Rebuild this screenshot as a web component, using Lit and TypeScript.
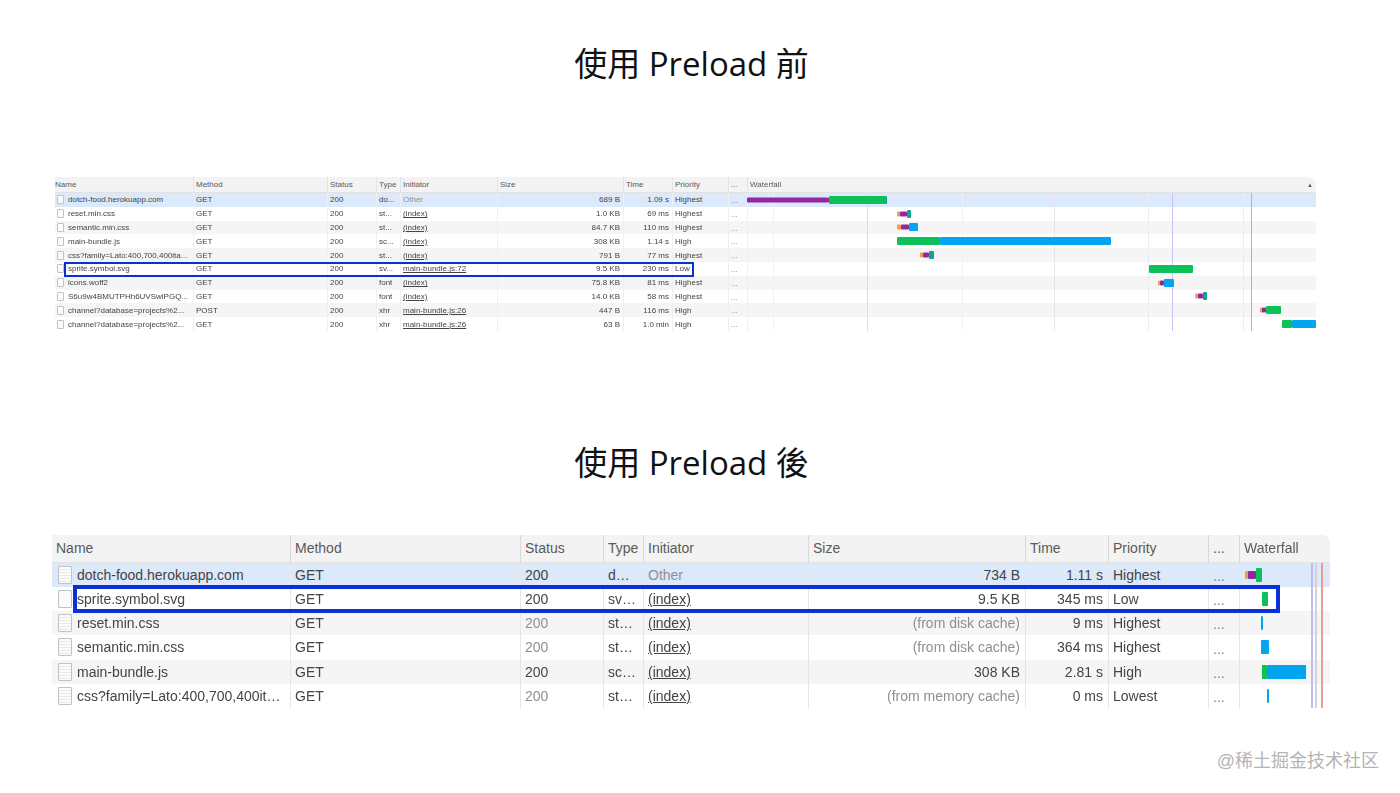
import { LitElement, html, css } from 'lit';
import { customElement, property } from 'lit/decorators.js';

type Seg = [number, number, string, boolean?]; // page x start, page x end, colour, thin
interface Row {
  name: string;
  method: string;
  status: string;
  type: string;
  init: string;
  size: string;
  time: string;
  prio: string;
  dim?: boolean;
  bars: Seg[];
}
interface Marker {
  x: number;
  color: string;
}

const PURPLE = '#93279f';
const GREEN = '#0cc158';
const BLUE = '#03a5ef';
const TEAL = '#12a488';
const ORANGE = '#f0a040';

@customElement('net-table')
export class NetTable extends LitElement {
  static styles = css`
    :host {
      display: block;
      position: relative;
      font-family: 'Liberation Sans', Arial, sans-serif;
      color: #444;
    }

    :host([size='small']) {
      width: 1261px;
      margin-left: 55px;
      font-size: 8px;
      --head: 16px;
      --row: 13.8px;
      --pad: 3px;
      --head-lift: 1px;
      --first-head: 0px;
      --first-row: 2px;
      --icon-w: 7px;
      --icon-h: 9px;
      --icon-gap: 4px;
      --tall: 8px;
      --thin: 5px;
      --rule: #f0f0f0;
      --head-rule: #e4e4e4;
      --marker: 1px;
      filter: blur(0.45px);
    }

    :host([size='large']) {
      width: 1278px;
      margin-left: 52px;
      font-size: 14px;
      --head: 28px;
      --row: 24.15px;
      --pad: 5px;
      --head-lift: 3px;
      --first-head: 4px;
      --first-row: 6px;
      --icon-w: 14px;
      --icon-h: 18px;
      --icon-gap: 5px;
      --tall: 14px;
      --thin: 8px;
      --rule: #e6e6e6;
      --head-rule: #d8d8d8;
      --marker: 1.5px;
      filter: blur(0.4px);
    }

    .row {
      display: grid;
      height: var(--row);
      align-items: stretch;
    }

    .row.head {
      height: var(--head);
      background: #f3f3f3;
      border-radius: 0 8px 0 0;
      color: #5a5a5a;
      box-shadow: inset 0 -1px 0 #e2e2e2;
    }

    .row.selected {
      background: #dce9fb;
    }

    .row.alt {
      background: #f5f5f5;
    }

    .cell {
      display: flex;
      align-items: center;
      gap: var(--icon-gap);
      padding: 0 var(--pad);
      min-width: 0;
      white-space: nowrap;
      overflow: hidden;
      box-shadow: inset 1px 0 0 var(--rule);
    }

    .cell:first-child {
      box-shadow: none;
    }

    .cell.first {
      padding-left: var(--first-row);
    }

    .head .cell {
      padding-bottom: var(--head-lift);
      box-shadow: inset 1px 0 0 var(--head-rule);
    }

    .head .cell:first-child {
      padding-left: var(--first-head);
      box-shadow: none;
    }

    .cell.right {
      justify-content: flex-end;
    }

    .cell.muted {
      color: #8f8f8f;
    }

    .cell.link span {
      text-decoration: underline;
      text-underline-offset: 1px;
    }

    .cell.more {
      color: #808080;
      padding-top: 0.15em;
    }

    .cell.falls {
      position: relative;
      overflow: visible;
      justify-content: space-between;
    }

    .file {
      flex: none;
      width: var(--icon-w);
      height: var(--icon-h);
      box-sizing: border-box;
      background: #fbfbfb;
      border: 1px solid #c2c2c2;
      border-radius: 1px;
    }

    :host([size='large']) .file.lined {
      background: repeating-linear-gradient(#fbfbfb 0 2px, #e9e9e9 2px 3px);
    }

    .sort {
      font-size: 6px;
      color: #555;
    }

    .bar {
      position: absolute;
      top: 50%;
      height: var(--tall);
      transform: translateY(-50%);
      border-radius: 1px;
      z-index: 2;
    }

    .bar.thin {
      height: var(--thin);
    }

    .marker {
      position: absolute;
      top: var(--head);
      bottom: 0;
      width: var(--marker);
    }

    .outline {
      position: absolute;
      box-sizing: border-box;
      border: solid #0b30d6;
      z-index: 3;
    }
  `;

  @property({ reflect: true }) size = 'small';
  @property({ type: Array }) widths: number[] = [];
  @property({ type: Array }) rows: Row[] = [];
  @property({ type: Array }) markers: Marker[] = [];
  @property({ type: Array }) box: number[] = [];
  @property({ type: Number }) originX = 0;
  @property({ type: Number }) originY = 0;
  @property({ type: Boolean }) sortArrow = false;

  private get falls() {
    return this.originX + this.widths.slice(0, -1).reduce((a, b) => a + b, 0);
  }

  private rowClass(i: number) {
    if (i === 0) return 'row selected';
    return i % 2 === 0 ? 'row alt' : 'row';
  }

  private renderBars(bars: Seg[]) {
    return bars.map(
      ([from, to, color, thin]) => html`<div
        class="bar ${thin ? 'thin' : ''}"
        style="left:${from - this.falls}px;width:${to - from}px;background:${color}"
      ></div>`,
    );
  }

  render() {
    const cols = `grid-template-columns:${this.widths.map((w) => `${w}px`).join(' ')}`;
    const [bx, by, bw, bh, bb] = this.box;
    return html`
      <div class="row head" style=${cols}>
        ${['Name', 'Method', 'Status', 'Type', 'Initiator', 'Size', 'Time', 'Priority', '...'].map(
          (t) => html`<div class="cell">${t}</div>`,
        )}
        <div class="cell falls">
          Waterfall${this.sortArrow ? html`<span class="sort">▲</span>` : ''}
        </div>
      </div>
      ${this.rows.map(
        (r, i) => html`
          <div class=${this.rowClass(i)} style=${cols}>
            <div class="cell first">
              <div class="file ${r.name.endsWith('.svg') ? '' : 'lined'}"></div>
              ${r.name}
            </div>
            <div class="cell">${r.method}</div>
            <div class="cell ${r.dim ? 'muted' : ''}">${r.status}</div>
            <div class="cell">${r.type}</div>
            <div class="cell link ${r.init === 'Other' ? 'muted' : ''}">
              ${r.init === 'Other' ? r.init : html`<span>${r.init}</span>`}
            </div>
            <div class="cell right ${r.size.startsWith('(') ? 'muted' : ''}">${r.size}</div>
            <div class="cell right">${r.time}</div>
            <div class="cell">${r.prio}</div>
            <div class="cell more">...</div>
            <div class="cell falls">${this.renderBars(r.bars)}</div>
          </div>
        `,
      )}
      ${this.markers.map(
        (m) => html`<div
          class="marker"
          style="left:${m.x - this.originX}px;background:${m.color}"
        ></div>`,
      )}
      <div
        class="outline"
        style="left:${bx - this.originX}px;top:${by - this.originY}px;width:${bw}px;height:${bh}px;border-width:${bb}px"
      ></div>
    `;
  }
}

const BEFORE: Row[] = [
  { name: 'dotch-food.herokuapp.com', method: 'GET', status: '200', type: 'do...', init: 'Other', size: '689 B', time: '1.09 s', prio: 'Highest', bars: [[747, 829, PURPLE, true], [829, 886, GREEN], [886, 887, TEAL]] },
  { name: 'reset.min.css', method: 'GET', status: '200', type: 'st...', init: '(index)', size: '1.0 KB', time: '69 ms', prio: 'Highest', bars: [[897, 900, ORANGE, true], [900, 907, PURPLE, true], [907, 911, TEAL]] },
  { name: 'semantic.min.css', method: 'GET', status: '200', type: 'st...', init: '(index)', size: '84.7 KB', time: '110 ms', prio: 'Highest', bars: [[897, 901, ORANGE, true], [901, 909, PURPLE, true], [909, 918, BLUE]] },
  { name: 'main-bundle.js', method: 'GET', status: '200', type: 'sc...', init: '(index)', size: '308 KB', time: '1.14 s', prio: 'High', bars: [[897, 940, GREEN], [940, 1111, BLUE]] },
  { name: 'css?family=Lato:400,700,400ita...', method: 'GET', status: '200', type: 'st...', init: '(index)', size: '791 B', time: '77 ms', prio: 'Highest', bars: [[920, 923, ORANGE, true], [923, 929, PURPLE, true], [929, 934, TEAL]] },
  { name: 'sprite.symbol.svg', method: 'GET', status: '200', type: 'sv...', init: 'main-bundle.js:72', size: '9.5 KB', time: '230 ms', prio: 'Low', bars: [[1149, 1193, GREEN]] },
  { name: 'icons.woff2', method: 'GET', status: '200', type: 'font', init: '(index)', size: '75.8 KB', time: '81 ms', prio: 'Highest', bars: [[1158, 1160, ORANGE, true], [1160, 1164, PURPLE, true], [1164, 1174, BLUE]] },
  { name: 'S6u9w4BMUTPHh6UVSwiPGQ...', method: 'GET', status: '200', type: 'font', init: '(index)', size: '14.0 KB', time: '58 ms', prio: 'Highest', bars: [[1195, 1198, ORANGE, true], [1198, 1203, PURPLE, true], [1203, 1207, TEAL]] },
  { name: 'channel?database=projects%2...', method: 'POST', status: '200', type: 'xhr', init: 'main-bundle.js:26', size: '447 B', time: '116 ms', prio: 'High', bars: [[1260, 1262, ORANGE, true], [1262, 1266, PURPLE, true], [1266, 1281, GREEN]] },
  { name: 'channel?database=projects%2...', method: 'GET', status: '200', type: 'xhr', init: 'main-bundle.js:26', size: '63 B', time: '1.0 min', prio: 'High', bars: [[1282, 1292, GREEN], [1292, 1316, BLUE]] },
];

const AFTER: Row[] = [
  { name: 'dotch-food.herokuapp.com', method: 'GET', status: '200', type: 'd…', init: 'Other', size: '734 B', time: '1.11 s', prio: 'Highest', bars: [[1245, 1248, ORANGE, true], [1248, 1256, PURPLE, true], [1256, 1262, GREEN]] },
  { name: 'sprite.symbol.svg', method: 'GET', status: '200', type: 'sv…', init: '(index)', size: '9.5 KB', time: '345 ms', prio: 'Low', bars: [[1262, 1268, GREEN]] },
  { name: 'reset.min.css', method: 'GET', status: '200', dim: true, type: 'st…', init: '(index)', size: '(from disk cache)', time: '9 ms', prio: 'Highest', bars: [[1261, 1263, BLUE]] },
  { name: 'semantic.min.css', method: 'GET', status: '200', dim: true, type: 'st…', init: '(index)', size: '(from disk cache)', time: '364 ms', prio: 'Highest', bars: [[1261, 1269, BLUE]] },
  { name: 'main-bundle.js', method: 'GET', status: '200', type: 'sc…', init: '(index)', size: '308 KB', time: '2.81 s', prio: 'High', bars: [[1262, 1267, GREEN], [1267, 1306, BLUE]] },
  { name: 'css?family=Lato:400,700,400it…', method: 'GET', status: '200', dim: true, type: 'st…', init: '(index)', size: '(from memory cache)', time: '0 ms', prio: 'Lowest', bars: [[1267, 1269, BLUE]] },
];

const BEFORE_MARKERS: Marker[] = [
  { x: 773, color: '#f2f2f2' },
  { x: 867, color: '#dedede' },
  { x: 962, color: '#f0f0f6' },
  { x: 1054, color: '#e6e6f2' },
  { x: 1148, color: '#ebebf2' },
  { x: 1172, color: '#c4c4f6' },
  { x: 1243, color: '#ebebf2' },
  { x: 1251, color: '#f59a8c' },
];

const AFTER_MARKERS: Marker[] = [
  { x: 1311, color: '#bcbcf0' },
  { x: 1315, color: '#d2d2d2' },
  { x: 1321, color: '#f09a94' },
];

@customElement('app-root')
export class AppRoot extends LitElement {
  static styles = css`
    :host {
      display: block;
      position: relative;
      width: 1400px;
      height: 793px;
      overflow: hidden;
      background: #fff;
    }

    section {
      height: 400px;
      padding-top: 41px;
      box-sizing: border-box;
    }

    h1 {
      margin: 0;
      height: 46px;
      line-height: 46px;
      padding-right: 17px;
      text-align: center;
      font-family: 'Open Sans', 'Noto Sans CJK TC', sans-serif;
      font-size: 33px;
      font-weight: 400;
      color: #111;
    }

    .before h1 {
      margin-bottom: 90px;
    }

    .after {
      padding-top: 40px;
    }

    .after h1 {
      margin-bottom: 49px;
    }

    .mark {
      position: absolute;
      right: 21px;
      bottom: 21px;
      font-family: 'Liberation Sans', 'Noto Sans CJK SC', sans-serif;
      font-size: 18px;
      line-height: 22px;
      color: #b4b4b4;
    }
  `;

  render() {
    return html`
      <section class="before">
        <h1 lang="zh-TW">使用 Preload 前</h1>
        <net-table
          size="small"
          sortArrow
          .originX=${55}
          .originY=${177}
          .widths=${[138, 134, 49, 24, 97, 126, 49, 56, 19, 569]}
          .rows=${BEFORE}
          .markers=${BEFORE_MARKERS}
          .box=${[64, 262, 630, 15, 2.5]}
        ></net-table>
      </section>
      <section class="after">
        <h1 lang="zh-TW">使用 Preload 後</h1>
        <net-table
          size="large"
          .originX=${52}
          .originY=${535}
          .widths=${[238, 230, 83, 40, 165, 217, 83, 100, 31, 91]}
          .rows=${AFTER}
          .markers=${AFTER_MARKERS}
          .box=${[73, 585, 1207, 28, 4]}
        ></net-table>
      </section>
      <div class="mark" lang="zh-CN">@稀土掘金技术社区</div>
    `;
  }
}
